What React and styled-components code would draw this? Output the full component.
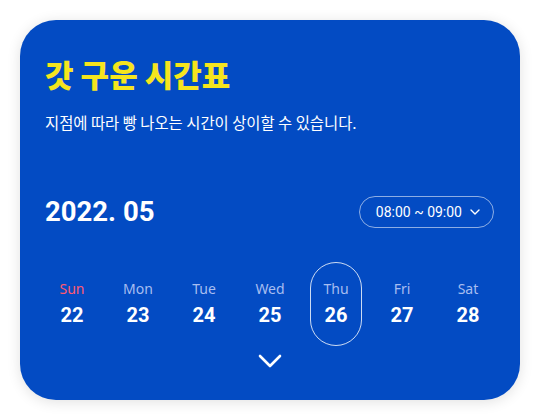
import React from 'react';
import styled, { createGlobalStyle } from 'styled-components';

const GlobalStyle = createGlobalStyle`
  body {
    margin: 0;
    background: #ffffff;
    font-family: Roboto, "Noto Sans CJK KR", sans-serif;
  }
`;

const Page = styled.div`
  width: 540px;
  height: 420px;
  padding: 20px;
  box-sizing: border-box;
`;

const Card = styled.div`
  height: 380px;
  background-color: #034bc3;
  border-radius: 36px;
  box-shadow: 0 2px 14px rgba(0, 0, 0, 0.12);
  padding: 34px 0 0;
  box-sizing: border-box;
  color: #fff;
  display: flex;
  flex-direction: column;
`;

const Head = styled.div`
  padding: 0 25px;
`;

const Title = styled.h1`
  margin: 0;
  font-family: "Noto Sans CJK KR", sans-serif;
  font-weight: 900;
  font-size: 31px;
  line-height: 40px;
  color: #f5e51e;
`;

const Sub = styled.p`
  margin: 18px 0 0;
  font-family: "Noto Sans CJK KR", sans-serif;
  font-size: 15.4px;
  line-height: 20px;
  color: #fff;
`;

const MonthRow = styled.div`
  margin-top: 63px;
  padding: 0 26px 0 25px;
  display: flex;
  align-items: center;
  justify-content: space-between;
`;

const Month = styled.div`
  font-family: Roboto, sans-serif;
  font-weight: 700;
  font-size: 27.5px;
  line-height: 34px;
`;

const TimeSelect = styled.button`
  height: 32px;
  padding: 0 13px 0 16px;
  border: 1px solid rgba(255, 255, 255, 0.55);
  border-radius: 16px;
  background: transparent;
  color: #fff;
  font-family: Roboto, sans-serif;
  font-size: 14px;
  display: flex;
  align-items: center;
  gap: 8px;
`;

const Week = styled.div`
  margin-top: 33px;
  padding: 0 19px;
  display: grid;
  grid-template-columns: repeat(7, 1fr);
`;

const Day = styled.div`
  display: flex;
  justify-content: center;
`;

const DayPill = styled.div`
  width: 52px;
  height: 84px;
  box-sizing: border-box;
  border-radius: 26px;
  border: 1.5px solid ${(p) => (p.$active ? 'rgba(255,255,255,0.8)' : 'transparent')};
  display: flex;
  flex-direction: column;
  align-items: center;
  justify-content: center;
  gap: 4px;
`;

const DayName = styled.span`
  font-family: "Noto Sans", sans-serif;
  font-size: 14px;
  line-height: 18px;
  color: ${(p) => (p.$sun ? '#ff5a70' : '#a7bdf0')};
`;

const DayNum = styled.span`
  font-family: Roboto, sans-serif;
  font-weight: 700;
  font-size: 20px;
  line-height: 26px;
  color: #fff;
`;

const More = styled.div`
  display: flex;
  justify-content: center;
  margin-top: 8px;
`;

const days = [
  ['Sun', 22],
  ['Mon', 23],
  ['Tue', 24],
  ['Wed', 25],
  ['Thu', 26],
  ['Fri', 27],
  ['Sat', 28],
];

export default function App() {
  return (
    <Page>
      <GlobalStyle />
      <Card>
        <Head>
          <Title>갓 구운 시간표</Title>
          <Sub>지점에 따라 빵 나오는 시간이 상이할 수 있습니다.</Sub>
        </Head>
        <MonthRow>
          <Month>2022. 05</Month>
          <TimeSelect>
            08:00 ~ 09:00
            <svg width="10" height="6" viewBox="0 0 10 6" fill="none">
              <path d="M1 1l4 4 4-4" stroke="#fff" strokeWidth="1.4" strokeLinecap="round" strokeLinejoin="round" />
            </svg>
          </TimeSelect>
        </MonthRow>
        <Week>
          {days.map(([name, num]) => (
            <Day key={name}>
              <DayPill $active={num === 26}>
                <DayName $sun={name === 'Sun'}>{name}</DayName>
                <DayNum>{num}</DayNum>
              </DayPill>
            </Day>
          ))}
        </Week>
        <More>
          <svg width="24" height="14" viewBox="0 0 24 14" fill="none">
            <path d="M2 2l10 10L22 2" stroke="#fff" strokeWidth="2.6" strokeLinecap="round" strokeLinejoin="round" />
          </svg>
        </More>
      </Card>
    </Page>
  );
}
